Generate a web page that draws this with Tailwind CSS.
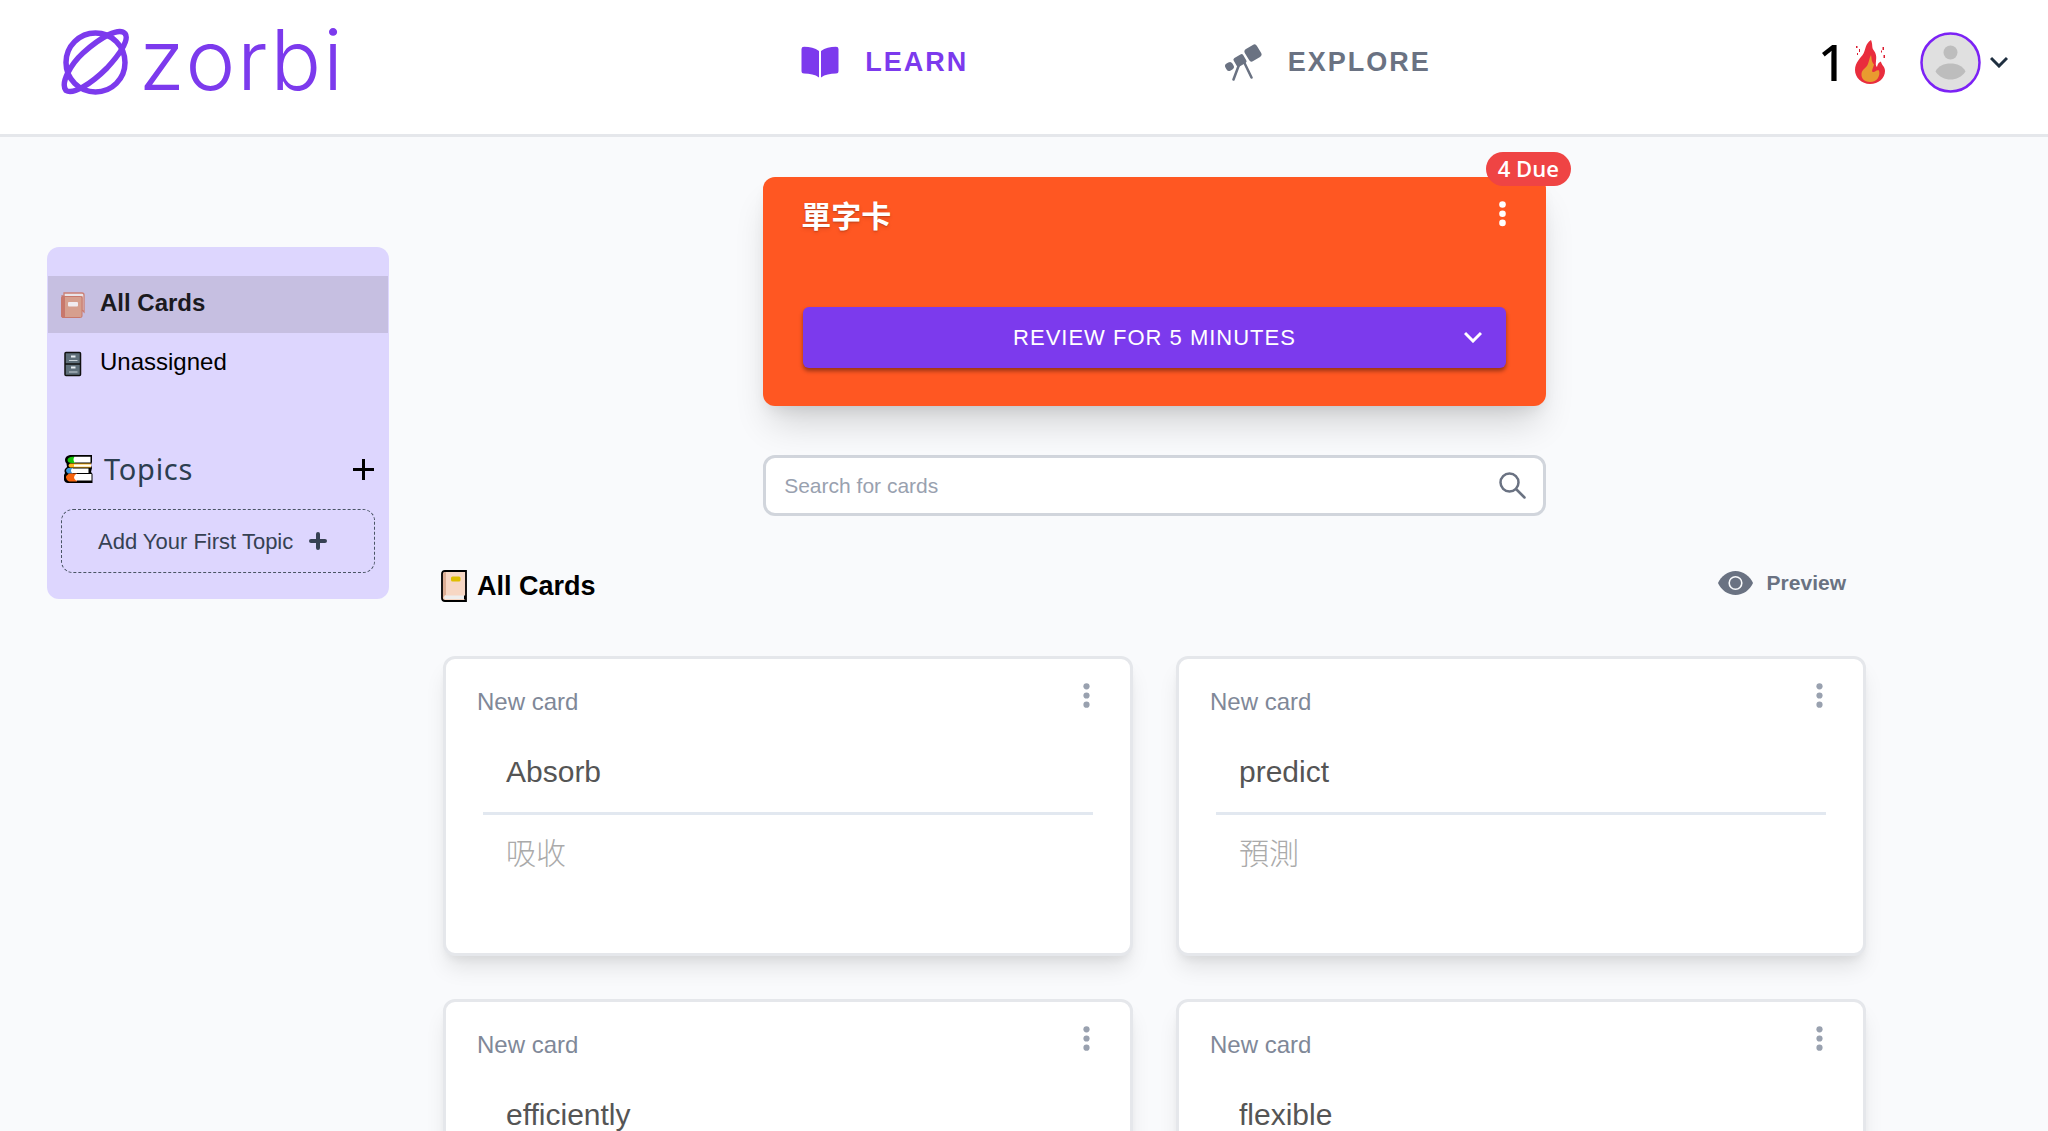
<!DOCTYPE html>
<html lang="en">
<head>
    <meta charset="UTF-8">
    <meta name="viewport" content="width=device-width, initial-scale=1.0">
    <title>Zorbi - Learn</title>
    <script src="https://cdn.jsdelivr.net/npm/@tailwindcss/browser@4"></script>
</head>
<body class="bg-[#f9fafc] min-h-screen overflow-x-hidden font-['Liberation_Sans','Noto_Sans_CJK_TC',sans-serif] text-black">
    <!-- Header -->
    <header class="grid grid-cols-[741fr_423fr_595fr_auto] items-center h-[137px] pl-[61px] pr-10 pb-2.5 bg-white border-b-3 border-gray-200">
        <a href="#" class="flex items-center gap-2 text-[#7c3aed]">
            <svg class="w-[70px] h-[76px] shrink-0" viewBox="0 0 70 76" fill="none" stroke="currentColor" stroke-width="5.500">
                <circle cx="34.500" cy="38.500" r="29.500"/>
                <path d="M64 9.500C58 3 40 13 22 29 10 40-1 59 5 66.500 12 71 30 60 46 44 58 31 69 16 64 9.500z"/>
            </svg>
            <span class="pb-1 text-[84px] leading-[110px] font-light tracking-wide font-['Inter',sans-serif]">zorbi</span>
        </a>
        <a href="#" class="flex items-center gap-[26px] text-[27px] leading-9 font-bold tracking-[2px] text-[#7c3aed]">
            <svg class="w-[38px] h-8" viewBox="0 0 38 32" fill="currentColor">
                <path d="M18 5v26.500C14 28.500 9 27.500 3 27.500Q.5 27.500 .5 25V3Q.5.8 3 .8 12 .8 18 5z"/>
                <path d="M20 5v26.500C24 28.500 29 27.500 35 27.500Q37.500 27.500 37.500 25V3Q37.500.8 35 .8 26 .8 20 5z"/>
            </svg>
            LEARN
        </a>
        <a href="#" class="flex items-center gap-[26px] text-[27px] leading-9 font-bold tracking-[2px] text-gray-500">
            <svg class="w-[38px] h-[38px]" viewBox="0 0 38 38" fill="currentColor">
                <rect x="22" y="3" width="14" height="14" rx="3" transform="rotate(-31 29 10)"/>
                <rect x="10.500" y="12.500" width="11" height="10" rx="2" transform="rotate(-31 16 17.500)"/>
                <rect x="1.500" y="19.500" width="8" height="8" rx="3" transform="rotate(-31 5.500 23.500)"/>
                <path d="M15.500 20.500 9.500 36.500M20 19l7.500 15.500" stroke="currentColor" stroke-width="2.500" stroke-linecap="round"/>
            </svg>
            EXPLORE
        </a>
        <div class="flex items-center">
            <span class="w-9 text-[50px] leading-[60px] font-medium font-['Noto_Sans',sans-serif]">1</span>
            <svg class="w-8 h-[46px]" viewBox="0 0 32 46" aria-label="day streak">
                <path d="M17 1c2 5 .5 7 2.500 10 3 4 3 7 2.500 11-.3 3-.5 5 1 6 .5-3 2-5 4-5.500 0 3 4 5 4 9.500 0 7-6.500 13-15 13S1 38.500 1 31c0-8 6-12 8.500-16.500C12 10 11 5 17 1z" fill="#e92d3d"/>
                <path d="M17 16c1 4 0 6 3 9.500-1 4-3 7-1 7.500 2 .5 3-2.500 6-1.500 1.500 5-1.500 11.500-9 11.500-6 0-9-4-8.500-8.500.5-4 4-5 6-8.500 1.500-3 1.500-6 3.500-10z" fill="#e99b2f"/>
                <path d="M2 7h1.500v2H2zM5 10h1v3H5zM3 14h1v2H3zM28.500 8H30v3h-1.500zM27 11.500h1v2h-1zM29.500 16h1.500v3h-1.500z" fill="#dc1c30"/>
            </svg>
            <button type="button" aria-label="Account menu" class="flex items-center gap-[9px] ml-[34px]">
                <svg class="w-[61px] h-[61px]" viewBox="0 0 61 61">
                    <circle cx="30.500" cy="30.500" r="29" fill="#e0e0e0" stroke="#7c22f5" stroke-width="2.500"/>
                    <circle cx="30.500" cy="20.500" r="7" fill="#bdbdbd"/>
                    <path d="M15.500 39.500C18 34 24 31.500 30.500 31.500S43 34 45.500 39.500C42 45 36 47.500 30.500 47.500S19 45 15.500 39.500z" fill="#bdbdbd"/>
                </svg>
                <svg class="w-[18px] h-3" viewBox="0 0 18 12" fill="none" stroke="#1f2f40" stroke-width="3">
                    <path d="M1 2l8 8 8-8"/>
                </svg>
            </button>
        </div>
    </header>

    <div class="flex items-start gap-[54px] pl-[47px] pr-[182px] pt-10">
        <!-- Sidebar -->
        <aside class="w-[342px] shrink-0 mt-[70px] px-px pt-[29px] pb-[26px] bg-[#ddd6fe] rounded-xl">
            <nav class="flex flex-col gap-0.5 text-2xl">
                <a href="#" class="flex items-center gap-[15px] h-[57px] pl-[13px] bg-[#c6bfe1] font-bold text-[#1b1a1e]">
                    <svg class="w-6 h-[26px]" viewBox="0 0 24 26">
                        <path d="M3 1h18q2 0 2 2v17l-2-2V5H3z" fill="#e9e4e8" stroke="#cb7f74" stroke-width="1.300"/>
                        <rect x=".5" y="4.500" width="20.500" height="21" rx="1.500" fill="#d69f8e" stroke="#c8786c"/>
                        <path d="M.5 3v21q0 1.500 1.500 1.500h2V4z" fill="#c8786c"/>
                        <rect x="7" y="10" width="10" height="4.500" rx="1" fill="#f0ecf0"/>
                    </svg>
                    <span class="pb-1">All Cards</span>
                </a>
                <a href="#" class="flex items-center gap-[15px] h-[57px] pl-[13px]">
                    <svg class="w-6 h-[26px]" viewBox="0 0 24 26">
                        <rect x="4" y="1.500" width="15.500" height="23" rx="1" fill="#5f6f7a" stroke="#111" stroke-width="1.500"/>
                        <path d="M4 13h16" stroke="#111" stroke-width="1.500"/>
                        <path d="M10 5.500h4.500M10 16.500h4.500" stroke="#e8eef2" stroke-width="2"/>
                        <path d="M8 9.500h8.500M8 21h8.500" stroke="#c9d2d8" stroke-width="1.200"/>
                    </svg>
                    <span class="pb-1">Unassigned</span>
                </a>
            </nav>
            <div class="flex items-center mt-[57px] h-10 pl-4 pr-3.5">
                <svg class="w-[29px] h-7" viewBox="0 0 29 28">
                    <path d="M28 0H6Q1 1 1 5q0 2 1.500 3.500l.5 3.500-2 2q-1 2 0 4l-1 2q-1 3 0 5 1 3 4 3h24.500v-9l-1.500-2 1-4-1-3 1-3z" fill="#000"/>
                    <path d="M9 1.800Q3.500 2 3.500 5T8 8h3V1.800z" fill="#16c60c"/>
                    <path d="M10.500 1.800h16V7.500h-16q-2-3 0-5.700z" fill="#fff"/>
                    <path d="M6 8.500h21v4H6q-3-2 0-4z" fill="#ffb71c"/>
                    <path d="M10 9.500h17v2.200H10z" fill="#fff"/>
                    <path d="M4 13h5v5.500H4q-4-3 0-5.500z" fill="#3a96dd"/>
                    <path d="M8 13.500h16.500v4.500H8q-2-2.500 0-4.500z" fill="#fff"/>
                    <path d="M5 18.500h8v8H5q-6-4 0-8z" fill="#f7630c"/>
                    <path d="M12 19h15.500v6.500H12q-4-3 0-6.500z" fill="#fff"/>
                </svg>
                <h2 class="ml-[11px] text-[29px] leading-9 tracking-wide text-[#2c3e50] font-['Noto_Sans',sans-serif]">Topics</h2>
                <button type="button" aria-label="Add topic" class="ml-auto">
                    <svg class="w-[21px] h-[21px]" viewBox="0 0 21 21" stroke="#000" stroke-width="3">
                        <path d="M10.500 0v21M0 10.500h21"/>
                    </svg>
                </button>
            </div>
            <button type="button" class="flex items-center gap-4 w-[314px] h-16 mt-5 mx-[13px] pl-9 border border-dashed border-gray-600 rounded-xl text-[22px] text-gray-700">
                Add Your First Topic
                <svg class="w-[18px] h-[18px]" viewBox="0 0 18 18" stroke="currentColor" stroke-width="4" stroke-linecap="round">
                    <path d="M9 2v14M2 9h14"/>
                </svg>
            </button>
        </aside>

        <main class="flex-1 min-w-0">
            <!-- Deck -->
            <section class="relative w-[55%] mx-auto px-10 pt-3 pb-[38px] bg-[#ff5722] rounded-xl shadow-[0_24px_36px_-8px_rgb(0_0_0/0.16),0_8px_16px_-6px_rgb(0_0_0/0.1)]">
                <span class="absolute -top-[25px] -right-[25px] px-3 h-[34px] bg-[#ef4444] rounded-full text-white text-[22px] leading-8 font-semibold font-['Open_Sans',sans-serif]">4 Due</span>
                <div class="flex items-start justify-between h-[118px]">
                    <h1 class="pt-1.5 -ml-0.5 text-[30px] leading-[44px] font-bold text-white text-shadow-md">單字卡</h1>
                    <button type="button" aria-label="Deck options" class="mt-3 text-white">
                        <svg class="w-[7px] h-[26px]" viewBox="0 0 7 26" fill="currentColor">
                            <circle cx="3.500" cy="3.500" r="3.300"/><circle cx="3.500" cy="12.700" r="3.300"/><circle cx="3.500" cy="21.900" r="3.300"/>
                        </svg>
                    </button>
                </div>
                <button type="button" class="relative w-full h-[61px] bg-[#7c3aed] rounded-md shadow-[0_3px_4px_rgb(0_0_0/0.4)] text-[22px] tracking-[1px] text-white">
                    REVIEW FOR 5 MINUTES
                    <svg class="absolute right-6 top-6 w-[18px] h-3" viewBox="0 0 18 12" fill="none" stroke="currentColor" stroke-width="3">
                        <path d="M1 2l8 8 8-8"/>
                    </svg>
                </button>
            </section>

            <!-- Search -->
            <form class="flex items-center w-[55%] h-[61px] mt-[49px] mx-auto pl-[18px] pr-[17px] bg-white border-3 border-gray-300 rounded-xl">
                <input type="text" aria-label="Search for cards" placeholder="Search for cards" class="flex-1 min-w-0 text-[21px] outline-none placeholder:text-gray-400">
                <button type="submit" aria-label="Search" class="text-gray-500">
                    <svg class="w-[27px] h-[27px]" viewBox="0 0 27 27" fill="none" stroke="currentColor" stroke-width="2.500" stroke-linecap="round">
                        <circle cx="10.500" cy="10.500" r="9"/><path d="M17.500 17.500l8 8"/>
                    </svg>
                </button>
            </form>

            <div class="flex items-center justify-between mt-[50px] h-10">
                <h2 class="flex items-center gap-2.5 -ml-0.5 text-[27px] leading-9 font-bold">
                    <svg class="w-[26px] h-8" viewBox="0 0 26 32">
                        <path d="M4 1h21v30H4q-3 0-3-3V4q0-3 3-3z" fill="#f7d7c4" stroke="#000" stroke-width="1.800"/>
                        <path d="M2 4q0-2 3-2v23q-2 0-3 3z" fill="#dcae95"/>
                        <path d="M4 25.500h19.500V29H4q-1.500-1.500 0-3.500z" fill="#eee"/>
                        <path d="M24 25.500v4" stroke="#000" stroke-width="2"/>
                        <rect x="10" y="6.500" width="9.500" height="5" rx="1.500" fill="#dfbe00"/>
                    </svg>
                    All Cards
                </h2>
                <button type="button" class="flex items-center gap-3.5 mr-5 pb-1.5 text-[21px] leading-8 font-bold text-gray-500">
                    <svg class="w-[35px] h-6" viewBox="0 0 35 24">
                        <path d="M0 12C3 5 10 0 17.500 0S32 5 35 12c-3 7-10 12-17.500 12S3 19 0 12z" fill="currentColor"/>
                        <circle cx="17.500" cy="12" r="6.300" fill="none" stroke="#f9fafc" stroke-width="1.600"/>
                    </svg>
                    Preview
                </button>
            </div>

            <!-- Card list -->
            <div id="cards" class="grid grid-cols-2 gap-[43px] mt-[50px] pb-10"></div>
        </main>
    </div>

    <template id="card-template">
        <article class="h-[300px] pl-[31px] pr-[37px] pt-6 bg-white border-3 border-gray-200 rounded-xl shadow-[0_15px_22px_-4px_rgb(0_0_0/0.1),0_6px_9px_-3px_rgb(0_0_0/0.06)]">
            <div class="flex items-start justify-between">
                <span class="pt-[3px] text-2xl leading-8 text-[#808898]">New card</span>
                <button type="button" aria-label="Card options" class="text-gray-400">
                    <svg class="w-[13px] h-[25px]" viewBox="0 0 13 25" fill="currentColor">
                        <circle cx="6.500" cy="3.300" r="3.100"/><circle cx="6.500" cy="12.500" r="3.100"/><circle cx="6.500" cy="21.700" r="3.100"/>
                    </svg>
                </button>
            </div>
            <div class="ml-1.5">
                <p class="front h-[94px] pl-[23px] pt-[34px] text-[30px] leading-10 text-[#555]"></p>
                <hr class="border-t-3 border-slate-200">
                <p class="back pl-[23px] pt-[19px] text-[30px] leading-10 font-light text-[#aaa]"></p>
            </div>
        </article>
    </template>

    <script>
        const cards = [
            { front: 'Absorb', back: '吸收' },
            { front: 'predict', back: '預測' },
            { front: 'efficiently', back: '有效率地' },
            { front: 'flexible', back: '靈活的' }
        ];

        const list = document.getElementById('cards');
        const template = document.getElementById('card-template');

        cards.forEach((card) => {
            const node = template.content.cloneNode(true);
            node.querySelector('.front').textContent = card.front;
            node.querySelector('.back').textContent = card.back;
            list.appendChild(node);
        });
    </script>
</body>
</html>
